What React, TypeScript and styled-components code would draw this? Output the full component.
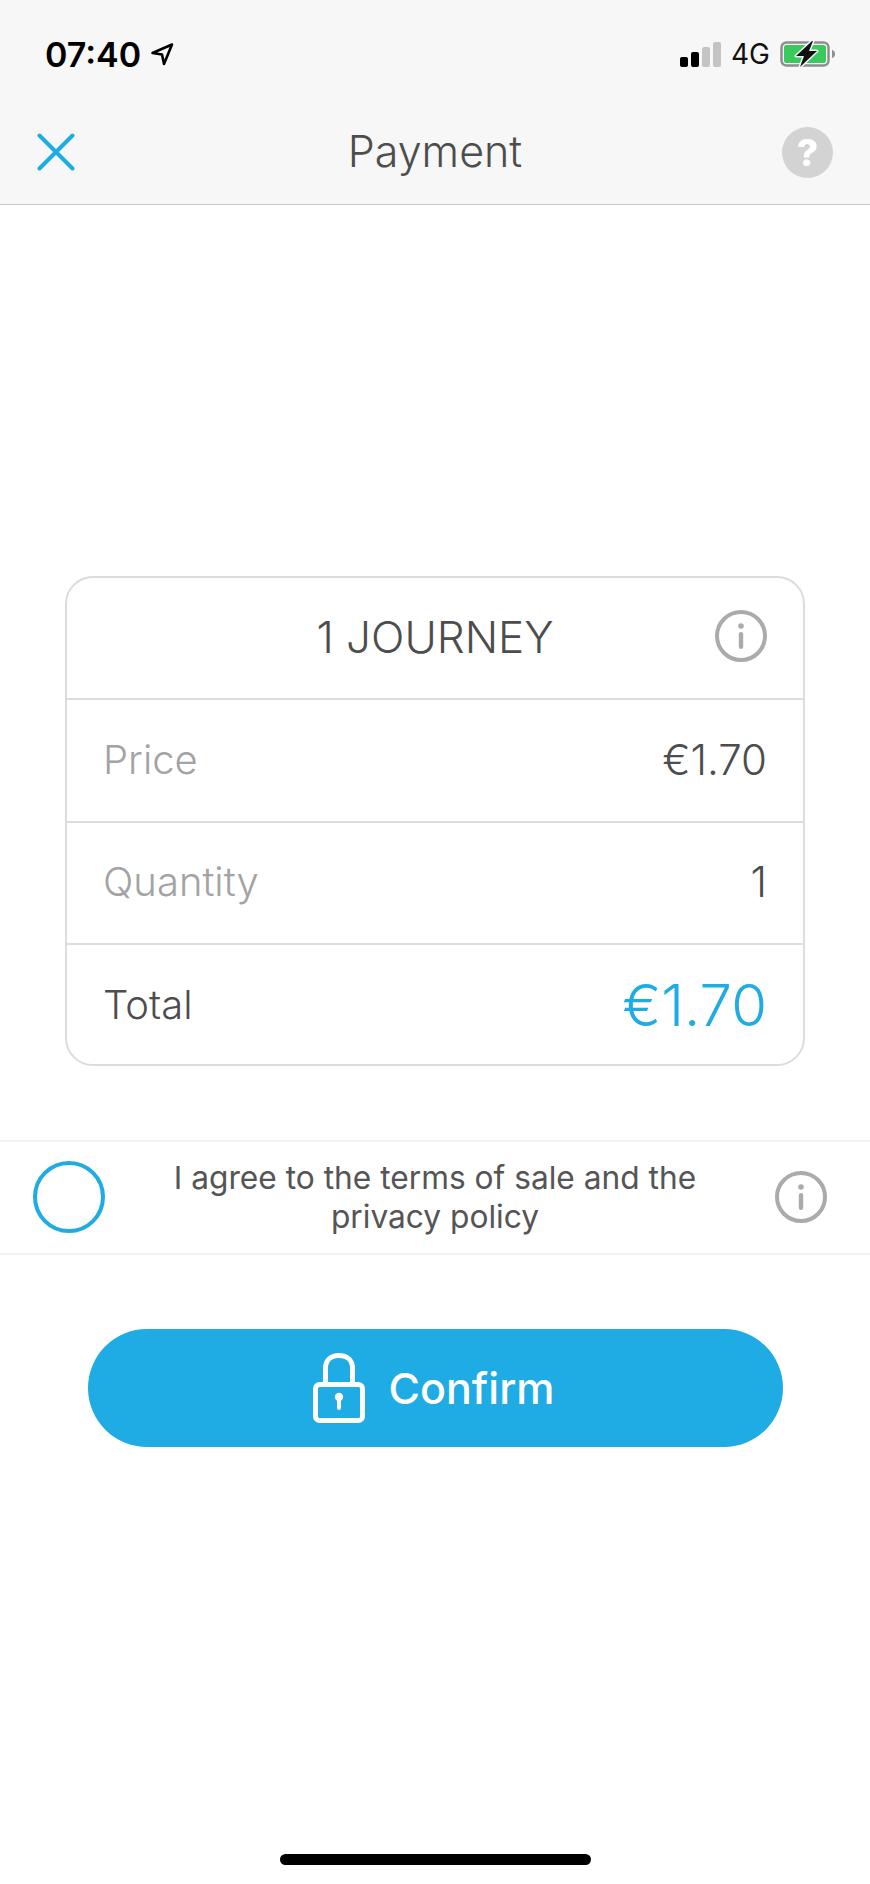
import { createGlobalStyle, styled } from "styled-components";

const BLUE = "#1fabe3";
const INK = "#555555";
const MUTED = "#ababab";

const GlobalStyle = createGlobalStyle`
  html, body {
    margin: 0;
    padding: 0;
    background: #ffffff;
  }
  body {
    font-family: Inter, "Liberation Sans", sans-serif;
  }
`;

const InfoIcon = () => (
  <InfoSvg viewBox="0 0 52 52">
    <circle cx="26" cy="26" r="24" fill="none" stroke={MUTED} strokeWidth="4" />
    <circle cx="26" cy="16" r="2.8" fill={MUTED} />
    <rect x="23.8" y="22" width="4.4" height="17" rx="2.2" fill={MUTED} />
  </InfoSvg>
);

const App = () => {
  return (
    <Page>
      <GlobalStyle />
      <Header>
        <StatusBar>
          <TimeGroup>
            <Time>07:40</Time>
            <svg width="24" height="24" viewBox="0 0 24 24">
              <path
                d="M22 2.500 2.500 11l9.500 1.500L14 22z"
                fill="none"
                stroke="#000"
                strokeWidth="2.600"
                strokeLinejoin="round"
              />
            </svg>
          </TimeGroup>
          <StatusRight>
            <Signal>
              <SignalBar $height={10} $on />
              <SignalBar $height={15} $on />
              <SignalBar $height={20} />
              <SignalBar $height={25} />
            </Signal>
            <Network>4G</Network>
            <svg width="56" height="26" viewBox="0 0 56 26">
              <rect x="1.500" y="1.500" width="47" height="23" rx="5" fill="none" stroke="#8e8e8e" strokeWidth="2.500" />
              <rect x="4" y="4" width="42" height="18" rx="2.500" fill="#3ac95c" />
              <path d="M52 9c2 .5 3 2 3 4s-1 3.500-3 4z" fill="#8e8e8e" />
              <path
                d="M32 0 16 15h8l-4 11 17-16h-8l4-10z"
                fill="#111"
                stroke="#f7f7f7"
                strokeWidth="3"
                paintOrder="stroke"
                strokeLinejoin="round"
              />
            </svg>
          </StatusRight>
        </StatusBar>
        <NavBar>
          <CloseSlot>
            <svg width="38" height="38" viewBox="0 0 38 38">
              <path d="M2.500 2.500 35.500 35.500M35.500 2.500 2.500 35.500" stroke={BLUE} strokeWidth="4" strokeLinecap="round" />
            </svg>
          </CloseSlot>
          <NavTitle>Payment</NavTitle>
          <HelpBadge>?</HelpBadge>
        </NavBar>
      </Header>

      <Main>
        <Card>
          <CardTitleRow>
            <CardTitle>1 JOURNEY</CardTitle>
            <CardInfo>
              <InfoIcon />
            </CardInfo>
          </CardTitleRow>
          <Row>
            <Label $muted>Price</Label>
            <Value>€1.70</Value>
          </Row>
          <Row>
            <Label $muted>Quantity</Label>
            <Value>1</Value>
          </Row>
          <Row>
            <Label>Total</Label>
            <TotalValue>€1.70</TotalValue>
          </Row>
        </Card>

        <AgreeRow>
          <Radio />
          <AgreeText>I agree to the terms of sale and the privacy policy</AgreeText>
          <AgreeInfo>
            <InfoIcon />
          </AgreeInfo>
        </AgreeRow>

        <ConfirmButton>
          <svg width="52" height="70" viewBox="0 0 52 70">
            <path
              d="M12.500 31V15C12.500 7 18 2.500 26 2.500S39.500 7 39.500 15v16"
              fill="none"
              stroke="#fff"
              strokeWidth="5"
            />
            <rect x="2.500" y="31.500" width="47" height="36" rx="4" fill="none" stroke="#fff" strokeWidth="5" />
            <circle cx="26" cy="44" r="4.200" fill="#fff" />
            <rect x="24" y="44" width="4" height="13" rx="2" fill="#fff" />
          </svg>
          Confirm
        </ConfirmButton>
      </Main>

      <HomeIndicator />
    </Page>
  );
};

export default App;

const Page = styled.div`
  width: 870px;
  height: 1884px;
  display: flex;
  flex-direction: column;
  background: #ffffff;
  overflow: hidden;
`;

const Header = styled.header`
  height: 205px;
  box-sizing: border-box;
  background: #f7f7f7;
  border-bottom: 1px solid #c9c9c9;
  display: flex;
  flex-direction: column;
`;

const StatusBar = styled.div`
  display: flex;
  justify-content: space-between;
  align-items: center;
  height: 26px;
  margin-top: 41px;
  padding: 0 34px 0 45px;
`;

const TimeGroup = styled.div`
  display: flex;
  align-items: center;
  gap: 9px;
`;

const Time = styled.span`
  font-size: 34px;
  font-weight: 600;
  color: #000000;
`;

const StatusRight = styled.div`
  display: flex;
  align-items: center;
  gap: 10px;
`;

const Signal = styled.div`
  display: flex;
  align-items: flex-end;
  gap: 3px;
  height: 25px;
`;

const SignalBar = styled.span<{ $height: number; $on?: boolean }>`
  width: 8px;
  height: ${(p) => p.$height}px;
  border-radius: 2px;
  background: ${(p) => (p.$on ? "#000000" : "#c4c4c4")};
`;

const Network = styled.span`
  font-size: 28px;
  font-weight: 400;
  color: #111111;
`;

const NavBar = styled.div`
  display: grid;
  grid-template-columns: 1fr auto 1fr;
  align-items: center;
  height: 52px;
  margin-top: 59px;
  padding: 0 37px;
`;

const CloseSlot = styled.span`
  display: flex;
`;

const NavTitle = styled.h1`
  margin: -3px 0 0;
  font-size: 43px;
  font-weight: 300;
  color: #4d4d4d;
`;

const HelpBadge = styled.span`
  justify-self: end;
  width: 51px;
  height: 51px;
  border-radius: 50%;
  background: #d3d3d3;
  color: #ffffff;
  font-size: 37px;
  font-weight: 800;
  display: flex;
  align-items: center;
  justify-content: center;
`;

const Main = styled.main`
  flex: 1;
  display: flex;
  flex-direction: column;
  padding-top: 371px;
`;

const Card = styled.section`
  width: 740px;
  height: 490px;
  box-sizing: border-box;
  margin-left: 65px;
  border: 2px solid #dcdcdc;
  border-radius: 28px;
  display: grid;
  grid-template-rows: 120px 123px 122px 1fr;
`;

const Row = styled.div`
  display: flex;
  justify-content: space-between;
  align-items: center;
  padding: 0 36px;
  border-top: 2px solid #dcdcdc;
`;

const CardTitleRow = styled.div`
  position: relative;
  display: flex;
  justify-content: center;
  align-items: center;
`;

const CardTitle = styled.h2`
  margin: -3px 0 0;
  font-size: 44px;
  font-weight: 300;
  color: #4d4d4d;
`;

const CardInfo = styled.span`
  position: absolute;
  right: 36px;
  top: 32px;
  display: flex;
`;

const Label = styled.span<{ $muted?: boolean }>`
  margin-top: ${(p) => (p.$muted ? "-3px" : "0")};
  font-size: 40px;
  font-weight: 300;
  color: ${(p) => (p.$muted ? "#a3a3a3" : "#4d4d4d")};
`;

const Value = styled.span`
  margin-top: -3px;
  font-size: 42px;
  font-weight: 300;
  color: #4d4d4d;
`;

const TotalValue = styled.span`
  font-size: 58px;
  font-weight: 300;
  color: ${BLUE};
`;

const AgreeRow = styled.div`
  height: 115px;
  box-sizing: border-box;
  margin-top: 74px;
  padding: 0 33px 2px;
  border-top: 2px solid #f2f2f2;
  border-bottom: 2px solid #f2f2f2;
  display: grid;
  grid-template-columns: 1fr 560px 1fr;
  align-items: center;
`;

const Radio = styled.span`
  width: 72px;
  height: 72px;
  box-sizing: border-box;
  border: 4px solid ${BLUE};
  border-radius: 50%;
`;

const AgreeText = styled.p`
  margin: 0;
  font-size: 31.700px;
  line-height: 39px;
  font-weight: 400;
  text-align: center;
  color: ${INK};
`;

const AgreeInfo = styled.span`
  justify-self: end;
  margin-right: 10px;
  display: flex;
`;

const InfoSvg = styled.svg`
  width: 52px;
  height: 52px;
  flex: none;
`;

const ConfirmButton = styled.button`
  width: 695px;
  height: 118px;
  margin: 74px 0 0 88px;
  padding: 0 3px 0 0;
  border: none;
  border-radius: 59px;
  background: ${BLUE};
  color: #ffffff;
  font-family: inherit;
  font-size: 43px;
  font-weight: 500;
  display: flex;
  justify-content: center;
  align-items: center;
  gap: 23px;
`;

const HomeIndicator = styled.div`
  width: 311px;
  height: 11px;
  margin: 0 auto 19px;
  border-radius: 6px;
  background: #000000;
`;
